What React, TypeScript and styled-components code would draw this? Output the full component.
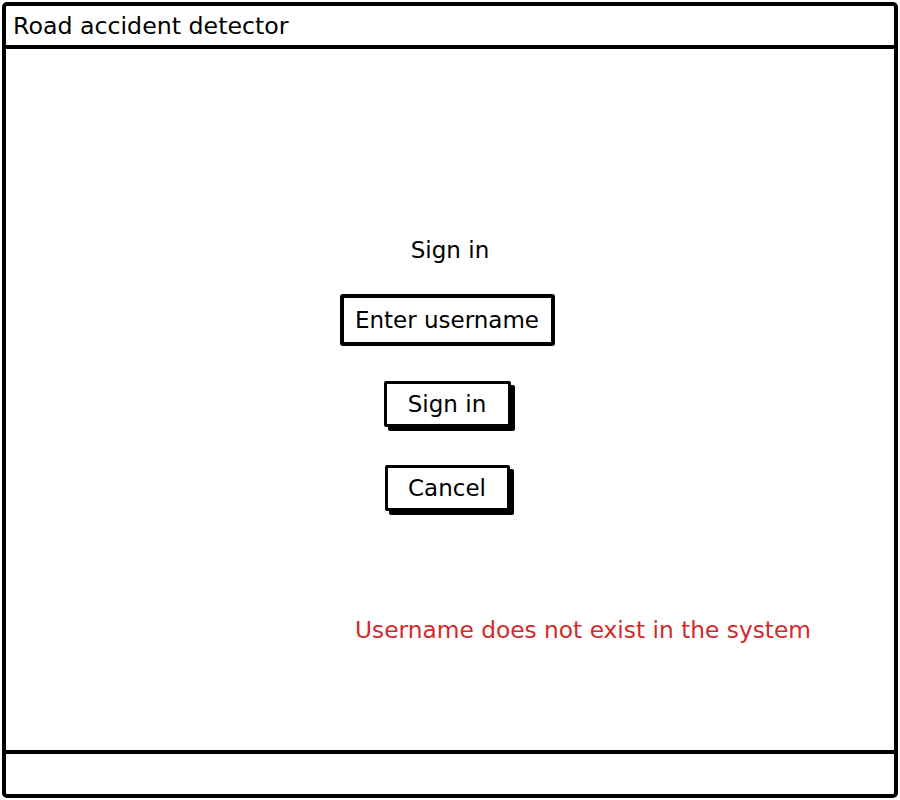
import React from "react";
import styled, { createGlobalStyle } from "styled-components";

const GlobalStyle = createGlobalStyle`
  html, body {
    margin: 0;
    padding: 0;
    background: #fff;
  }
  body {
    font-family: "DejaVu Sans", "Noto Sans", sans-serif;
    color: #000;
  }
`;

const Frame = styled.div`
  box-sizing: border-box;
  margin: 2px;
  width: 896px;
  height: 796px;
  border: 4px solid #000;
  border-radius: 5px;
  display: flex;
  flex-direction: column;
  background: #fff;
`;

const TitleBar = styled.div`
  box-sizing: border-box;
  height: 43px;
  border-bottom: 4px solid #000;
  padding: 5px 0 0 7px;
  font-size: 23.7px;
  line-height: 30px;
`;

const Content = styled.div`
  flex: 1;
  display: flex;
  flex-direction: column;
  align-items: center;
  padding-right: 6px;
`;

const Heading = styled.div`
  margin-top: 186px;
  font-size: 23px;
  line-height: 30px;
  padding-left: 6px;
`;

const Input = styled.div`
  box-sizing: border-box;
  margin-top: 29px;
  width: 215px;
  height: 52px;
  border: 4px solid #000;
  border-radius: 3px;
  display: flex;
  align-items: center;
  justify-content: center;
  font-size: 23px;
`;

const Button = styled.button<{ $top: number; $width: number }>`
  box-sizing: border-box;
  margin-top: ${(p) => p.$top}px;
  width: ${(p) => p.$width}px;
  height: 46px;
  border: 3px solid #000;
  border-radius: 2px;
  background: #fff;
  box-shadow: 4px 4px 0 #000;
  font-family: inherit;
  font-size: 23px;
  color: #000;
  padding: 0;
`;

const ErrorText = styled.div`
  align-self: flex-start;
  margin: 104px 0 0 349px;
  font-size: 23.3px;
  line-height: 30px;
  color: #d42a2a;
`;

const Footer = styled.div`
  height: 40px;
  border-top: 4px solid #000;
`;

export default function App() {
  return (
    <>
      <GlobalStyle />
      <Frame>
        <TitleBar>Road accident detector</TitleBar>
        <Content>
          <Heading>Sign in</Heading>
          <Input>Enter username</Input>
          <Button $top={35} $width={127}>Sign in</Button>
          <Button $top={38} $width={125}>Cancel</Button>
          <ErrorText>Username does not exist in the system</ErrorText>
        </Content>
        <Footer />
      </Frame>
    </>
  );
}
